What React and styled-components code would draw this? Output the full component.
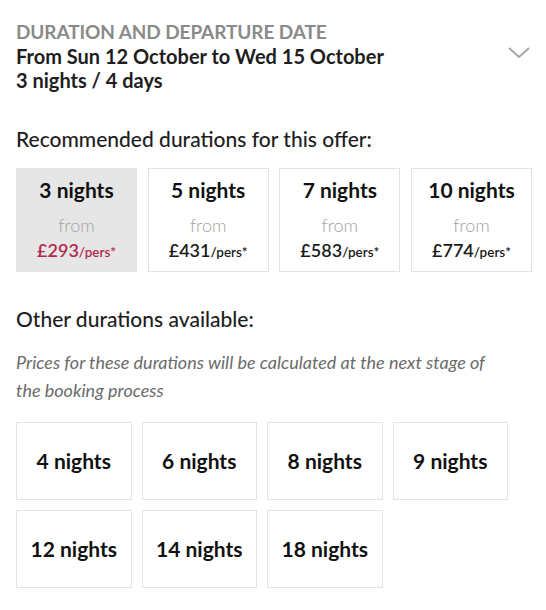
import React from "react";
import styled, { createGlobalStyle } from "styled-components";

const GlobalStyle = createGlobalStyle`
  body {
    margin: 0;
    background: #fff;
    font-family: Lato, "Liberation Sans", sans-serif;
    color: #1e1e1e;
  }
`;

const Panel = styled.div`
  width: 546px;
  box-sizing: border-box;
  padding: 20px 16px 16px 16px;
`;

const Header = styled.div`
  display: flex;
  justify-content: space-between;
  align-items: flex-start;
`;

const Kicker = styled.div`
  font-size: 19px;
  font-weight: 700;
  line-height: 24px;
  letter-spacing: -0.1px;
  color: #8a8a8a;
  text-transform: uppercase;
`;

const Dates = styled.div`
  font-size: 20px;
  font-weight: 700;
  line-height: 24px;
  color: #1e1e1e;
`;

const Chevron = styled.svg`
  margin-top: 27px;
  width: 22px;
  height: 12px;
  flex-shrink: 0;
`;

const SectionTitle = styled.h2`
  margin: ${(p) => p.$top}px 0 17px;
  font-size: 21px;
  font-weight: 500;
  line-height: 24px;
  color: #1e1e1e;
`;

const Note = styled.p`
  margin: 9px 0 18px;
  max-width: 478px;
  font-size: 18px;
  font-style: italic;
  line-height: 28px;
  color: #6b6b6b;
`;

const Grid = styled.div`
  display: grid;
  grid-template-columns: repeat(4, ${(p) => p.$col}px);
  gap: 10px ${(p) => p.$gap}px;
`;

const Card = styled.div`
  box-sizing: border-box;
  height: ${(p) => p.$height}px;
  border: 1px solid #e3e3e3;
  background: ${(p) => (p.$active ? "#e6e6e6" : "#fff")};
  display: flex;
  flex-direction: column;
  align-items: center;
  justify-content: center;
`;

const Nights = styled.div`
  font-size: 21px;
  font-weight: 700;
  line-height: 24px;
  color: #111;
`;

const From = styled.div`
  margin-top: 12px;
  font-size: 18px;
  font-weight: 300;
  line-height: 22px;
  color: #a3a3a3;
`;

const Price = styled.div`
  margin-top: 3px;
  font-size: 18px;
  font-weight: 600;
  line-height: 22px;
  color: ${(p) => (p.$active ? "#b12a4d" : "#1a1a1a")};

  small {
    font-size: 13.5px;
    font-weight: 600;
  }
`;

const recommended = [
  { nights: 3, price: 293, active: true },
  { nights: 5, price: 431 },
  { nights: 7, price: 583 },
  { nights: 10, price: 774 },
];

const others = [4, 6, 8, 9, 12, 14, 18];

export default function App() {
  return (
    <Panel>
      <GlobalStyle />
      <Header>
        <div>
          <Kicker>Duration and departure date</Kicker>
          <Dates>From Sun 12 October to Wed 15 October</Dates>
          <Dates>3 nights / 4 days</Dates>
        </div>
        <Chevron viewBox="0 0 22 12">
          <path d="M1 1l10 9 10-9" fill="none" stroke="#a6a6a6" strokeWidth="2" />
        </Chevron>
      </Header>

      <SectionTitle $top={35}>Recommended durations for this offer:</SectionTitle>
      <Grid $col={121} $gap={10.67}>
        {recommended.map((r) => (
          <Card key={r.nights} $height={104} $active={r.active}>
            <Nights>{r.nights} nights</Nights>
            <From>from</From>
            <Price $active={r.active}>
              £{r.price}
              <small>/pers*</small>
            </Price>
          </Card>
        ))}
      </Grid>

      <SectionTitle $top={35}>Other durations available:</SectionTitle>
      <Note>
        Prices for these durations will be calculated at the next stage of
        the booking process
      </Note>
      <Grid $col={115.5} $gap={10}>
        {others.map((n) => (
          <Card key={n} $height={78}>
            <Nights>{n} nights</Nights>
          </Card>
        ))}
      </Grid>
    </Panel>
  );
}
